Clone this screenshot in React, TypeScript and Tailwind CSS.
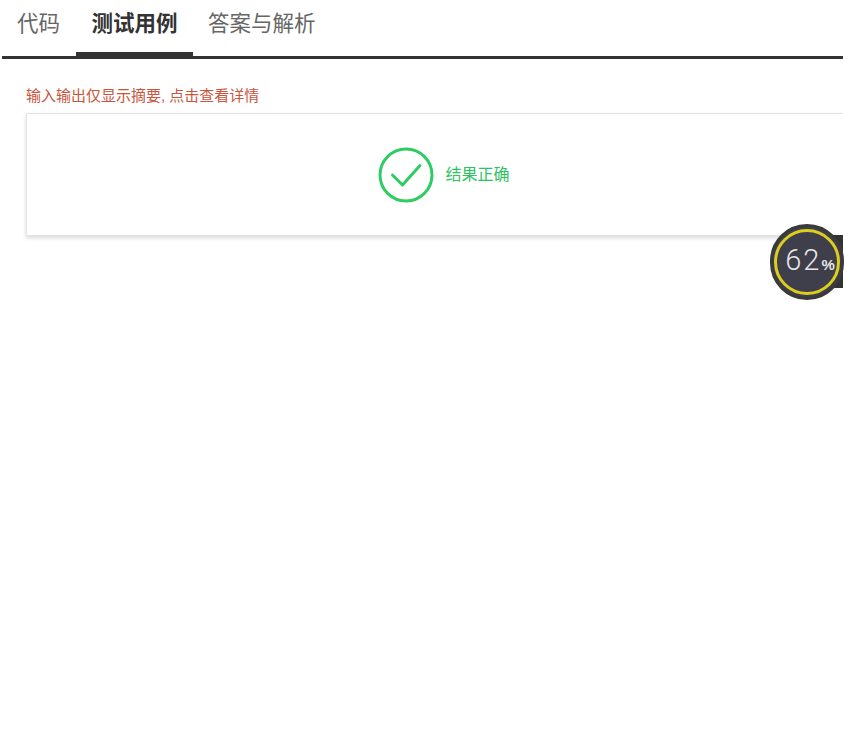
const FONT = "font-['Liberation_Sans','Noto_Sans_CJK_SC',sans-serif]";

const App = () => {
  return (
    <div className={`relative h-[736px] w-[845px] overflow-hidden bg-white ${FONT}`}>
      <div className="ml-0.5 mr-0.5 flex h-[59px] border-b-[3px] border-[#333333]">
        <div className="flex h-[48px] w-[74px] items-center justify-center pr-px text-[21.5px] text-[#666666]">代码</div>
        <div className="flex h-[56px] w-[117px] items-start justify-center border-b-[4px] border-[#333333] pt-[10px] text-[21.5px] font-bold leading-[29px] text-[#333333]">
          测试用例
        </div>
        <div className="flex h-[48px] items-center pl-[15px] text-[21.5px] text-[#666666]">答案与解析</div>
      </div>

      <div className="w-[843px] overflow-hidden pb-2 pl-[26px] pt-[27px]">
        <p className="text-[15px] leading-[20px] text-[#c9563c]">输入输出仅显示摘要, 点击查看详情</p>
        <div className="mt-[7px] flex h-[123px] w-[840px] items-center justify-center border border-[#e4e4e4] bg-white pr-1 shadow-[0_2px_4px_rgba(0,0,0,0.15)]">
          <svg width="56" height="56" viewBox="0 0 56 56" fill="none" className="mr-[11px]">
            <circle cx="28" cy="28" r="26" stroke="#2ecc63" strokeWidth="3" />
            <path d="M14.5 28 L24.5 38 L42 18.5" stroke="#2ecc63" strokeWidth="3" strokeLinecap="round" strokeLinejoin="round" />
          </svg>
          <span className="text-[16px] text-[#2dc45f]">结果正确</span>
        </div>
      </div>

      <div className="absolute left-[830px] top-[235px] h-[53px] w-[13px] bg-[#333333]" />
      <div className="absolute left-[770px] top-[224px] flex h-[76px] w-[74px] items-center justify-center rounded-full border-[3px] border-[#3a3a3a] bg-[#3f3f4c]">
        <div className="flex h-[66px] w-[66px] shrink-0 items-baseline justify-center rounded-full border-[3px] border-[#dccd1e] pl-1.5 pt-[10px] text-[#e6e6e6]">
          <span className="font-['Roboto',sans-serif] text-[29px] font-light leading-[36px] tracking-[2px]">62</span>
          <span className="text-[15px] font-bold">%</span>
        </div>
      </div>
    </div>
  );
};

export default App;
